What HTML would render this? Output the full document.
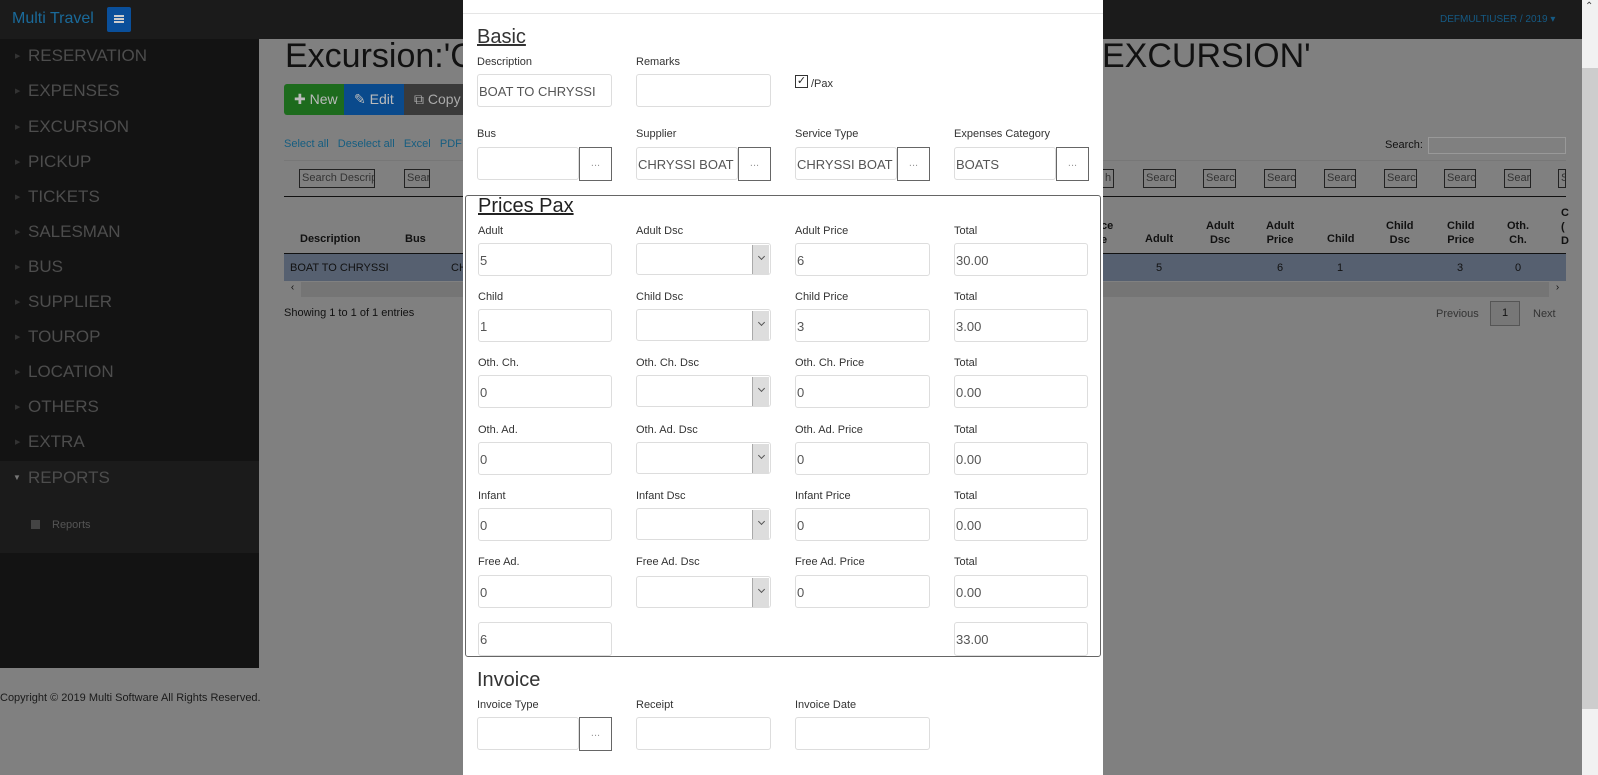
<!DOCTYPE html>
<html><head><meta charset="utf-8"><style>
*{box-sizing:border-box;margin:0;padding:0}
body{width:1598px;height:775px;overflow:hidden;position:relative;background:#808080;font-family:"Liberation Sans",Arial,sans-serif}
.a{position:absolute;white-space:nowrap}
.nav{left:0;top:0;width:1582px;height:39px;background:#1b1b1b}
.side{left:0;top:39px;width:259px;height:629px;background:#131313}
.si{left:28px;font-size:17px;color:#4d4d4d}
.car{left:15px;font-size:7px;color:#333}
.hd{font-size:11px;font-weight:bold;color:#111;text-align:center;line-height:14px}
.sb{height:19px;border:1px solid #222;font-size:11px;color:#333;padding:2px;overflow:hidden}
.modal{left:463px;top:0;width:640px;height:775px;background:#fff}
.lb{font-size:11px;color:#333}
.in{height:33px;border:1px solid #ddd;border-radius:3px;font-size:13px;color:#555;padding:9px 1px;overflow:hidden;background:#fff}
.bt{width:33px;height:34px;border:1px solid #666;font-size:11px;color:#999;text-align:center;line-height:30px;background:#fff}
.sel{height:32px;width:135px;border:1px solid #ddd;border-radius:3px;background:#fff}
.sel:after{content:"";position:absolute;right:1px;top:1px;width:16px;height:29px;background:#ddd;border-left:1px solid #aaa}
.sel i{position:absolute;right:6px;top:10px;width:5px;height:5px;border-right:1px solid #555;border-bottom:1px solid #555;transform:rotate(45deg);z-index:2}
</style></head><body>
<div class="a nav"></div>
<div class="a" style="left:12px;top:10px;font-size:16px;color:#1a6a9a">Multi Travel</div>
<div class="a" style="left:107px;top:7px;width:24px;height:25px;background:#0a4f9a;border-radius:2px"><div style="position:absolute;left:7px;top:8px;width:10px;height:2px;background:#ccc;box-shadow:0 3px 0 #ccc,0 6px 0 #ccc"></div></div>
<div class="a" style="left:1440px;top:14px;font-size:10px;color:#155a84">DEFMULTIUSER / 2019 &#9662;</div>
<div class="a" style="left:1582px;top:0;width:16px;height:775px;background:#f1f1f1"></div>
<div class="a" style="left:1582px;top:68px;width:16px;height:641px;background:#cdcdcd"></div>
<div class="a" style="left:1585px;top:1px;font-size:10px;color:#444">&#8963;</div>
<div class="a side"></div>
<div class="a" style="left:0;top:461px;width:259px;height:92px;background:#1b1b1b"></div>
<div class="a car" style="top:52px">&#9654;</div><div class="a si" style="top:46px">RESERVATION</div>
<div class="a car" style="top:87px">&#9654;</div><div class="a si" style="top:81px">EXPENSES</div>
<div class="a car" style="top:123px">&#9654;</div><div class="a si" style="top:117px">EXCURSION</div>
<div class="a car" style="top:158px">&#9654;</div><div class="a si" style="top:152px">PICKUP</div>
<div class="a car" style="top:193px">&#9654;</div><div class="a si" style="top:187px">TICKETS</div>
<div class="a car" style="top:228px">&#9654;</div><div class="a si" style="top:222px">SALESMAN</div>
<div class="a car" style="top:263px">&#9654;</div><div class="a si" style="top:257px">BUS</div>
<div class="a car" style="top:298px">&#9654;</div><div class="a si" style="top:292px">SUPPLIER</div>
<div class="a car" style="top:333px">&#9654;</div><div class="a si" style="top:327px">TOUROP</div>
<div class="a car" style="top:368px">&#9654;</div><div class="a si" style="top:362px">LOCATION</div>
<div class="a car" style="top:403px">&#9654;</div><div class="a si" style="top:397px">OTHERS</div>
<div class="a car" style="top:438px">&#9654;</div><div class="a si" style="top:432px">EXTRA</div>
<div class="a" style="left:13px;top:473px;font-size:8px;color:#777">&#9660;</div><div class="a si" style="top:468px">REPORTS</div>
<div class="a" style="left:31px;top:520px;width:9px;height:9px;background:#444"></div>
<div class="a" style="left:52px;top:519px;font-size:11px;color:#555">Reports</div>
<div class="a" style="left:0;top:692px;font-size:11px;color:#1a1a1a">Copyright © 2019 Multi Software All Rights Reserved.</div>

<div class="a" style="left:285px;top:37px;font-size:34px;color:#111">Excursion:'C</div>
<div class="a" style="left:1102px;top:37px;font-size:34px;color:#111">EXCURSION'</div>
<div class="a" style="left:284px;top:84px;width:60px;height:31px;background:#1d6b1d;border-radius:3px 0 0 3px;color:#bbb;font-size:14px;line-height:31px;padding-left:10px">&#10010; New</div>
<div class="a" style="left:344px;top:84px;width:60px;height:31px;background:#0a4a8c;color:#bbb;font-size:14px;line-height:31px;padding-left:10px">&#9998; Edit</div>
<div class="a" style="left:404px;top:84px;width:60px;height:31px;background:#3a3a3a;color:#aaa;font-size:14px;line-height:31px;padding-left:10px">&#10697; Copy</div>
<div class="a" style="left:284px;top:138px;font-size:11px;color:#155d80;word-spacing:0">Select all &nbsp;&nbsp;Deselect all &nbsp;&nbsp;Excel &nbsp;&nbsp;PDF</div>
<div class="a" style="left:284px;top:160px;width:1282px;height:1px;background:#777"></div>
<div class="a sb" style="left:299px;top:169px;width:76px">Search Descrip</div>
<div class="a sb" style="left:404px;top:169px;width:26px">Sear</div>
<div class="a sb" style="left:1102px;top:169px;width:12px">h</div>
<div class="a sb" style="left:1143px;top:169px;width:33px">Searc</div>
<div class="a sb" style="left:1203px;top:169px;width:33px">Searc</div>
<div class="a sb" style="left:1264px;top:169px;width:32px">Searc</div>
<div class="a sb" style="left:1324px;top:169px;width:32px">Searc</div>
<div class="a sb" style="left:1384px;top:169px;width:33px">Searc</div>
<div class="a sb" style="left:1444px;top:169px;width:32px">Searc</div>
<div class="a sb" style="left:1504px;top:169px;width:27px">Sear</div>
<div class="a sb" style="left:1558px;top:169px;width:8px">S</div>
<div class="a" style="left:1385px;top:139px;font-size:11px;color:#111">Search:</div>
<div class="a" style="left:1428px;top:137px;width:138px;height:17px;border:1px solid #999;background:#808080"></div>
<div class="a" style="left:284px;top:196px;width:1282px;height:1px;background:#111"></div>
<div class="a hd" style="left:300px;top:232px">Description</div>
<div class="a hd" style="left:405px;top:232px">Bus</div>
<div class="a hd" style="left:1101px;top:219px;text-align:left">ce<br>e</div>
<div class="a hd" style="left:1145px;top:232px">Adult</div>
<div class="a hd" style="left:1206px;top:219px">Adult<br>Dsc</div>
<div class="a hd" style="left:1266px;top:219px">Adult<br>Price</div>
<div class="a hd" style="left:1327px;top:232px">Child</div>
<div class="a hd" style="left:1386px;top:219px">Child<br>Dsc</div>
<div class="a hd" style="left:1447px;top:219px">Child<br>Price</div>
<div class="a hd" style="left:1507px;top:219px">Oth.<br>Ch.</div>
<div class="a hd" style="left:1561px;top:206px;text-align:left">C<br>(<br>D</div>
<div class="a" style="left:284px;top:253px;width:1282px;height:1px;background:#111"></div>
<div class="a" style="left:284px;top:254px;width:1282px;height:27px;background:#566070"></div>
<div class="a" style="left:290px;top:262px;font-size:11px;color:#111">BOAT TO CHRYSSI</div>
<div class="a" style="left:451px;top:262px;font-size:11px;color:#111">CH</div>
<div class="a" style="left:1156px;top:262px;font-size:11px;color:#111">5</div>
<div class="a" style="left:1277px;top:262px;font-size:11px;color:#111">6</div>
<div class="a" style="left:1337px;top:262px;font-size:11px;color:#111">1</div>
<div class="a" style="left:1457px;top:262px;font-size:11px;color:#111">3</div>
<div class="a" style="left:1515px;top:262px;font-size:11px;color:#111">0</div>
<div class="a" style="left:284px;top:282px;width:1282px;height:15px;background:#757575"></div>
<div class="a" style="left:284px;top:282px;width:17px;height:15px;background:#808080;font-size:10px;color:#111;text-align:center">&#8249;</div>
<div class="a" style="left:1549px;top:282px;width:17px;height:15px;background:#808080;font-size:10px;color:#111;text-align:center">&#8250;</div>
<div class="a" style="left:284px;top:307px;font-size:11px;color:#111">Showing 1 to 1 of 1 entries</div>
<div class="a" style="left:1436px;top:308px;font-size:11px;color:#333">Previous</div>
<div class="a" style="left:1490px;top:301px;width:30px;height:25px;border:1px solid #555;background:#777;font-size:11px;color:#111;text-align:center;line-height:23px">1</div>
<div class="a" style="left:1533px;top:308px;font-size:11px;color:#333">Next</div>

<div class="a modal"></div>
<div class="a" style="left:463px;top:13px;width:640px;height:1px;background:#e5e5e5"></div>
<div class="a" style="left:477px;top:26px;font-size:20px;color:#333;text-decoration:underline">Basic</div>
<div class="a lb" style="left:477px;top:56px">Description</div>
<div class="a lb" style="left:636px;top:56px">Remarks</div>
<div class="a in" style="left:477px;top:74px;width:135px">BOAT TO CHRYSSI</div>
<div class="a in" style="left:636px;top:74px;width:135px"></div>
<div class="a" style="left:795px;top:75px;width:13px;height:13px;border:1px solid #333;font-size:11px;line-height:11px;text-align:center;color:#222">&#10003;</div>
<div class="a lb" style="left:811px;top:78px">/Pax</div>
<div class="a lb" style="left:477px;top:128px">Bus</div>
<div class="a lb" style="left:636px;top:128px">Supplier</div>
<div class="a lb" style="left:795px;top:128px">Service Type</div>
<div class="a lb" style="left:954px;top:128px">Expenses Category</div>
<div class="a in" style="left:477px;top:147px;width:102px"></div><div class="a bt" style="left:579px;top:147px">...</div>
<div class="a in" style="left:636px;top:147px;width:102px">CHRYSSI BOAT C</div><div class="a bt" style="left:738px;top:147px">...</div>
<div class="a in" style="left:795px;top:147px;width:102px">CHRYSSI BOAT</div><div class="a bt" style="left:897px;top:147px">...</div>
<div class="a in" style="left:954px;top:147px;width:102px">BOATS</div><div class="a bt" style="left:1056px;top:147px">...</div>
<div class="a" style="left:465px;top:195px;width:636px;height:462px;border:1px solid #666;border-radius:3px"></div>
<div class="a" style="left:478px;top:195px;font-size:20px;color:#222;text-decoration:underline">Prices Pax</div>

<div class="a lb" style="left:478px;top:225px">Adult</div><div class="a lb" style="left:636px;top:225px">Adult Dsc</div><div class="a lb" style="left:795px;top:225px">Adult Price</div><div class="a lb" style="left:954px;top:225px">Total</div>
<div class="a in" style="left:478px;top:243px;width:134px">5</div><div class="a sel" style="left:636px;top:243px"><i></i></div><div class="a in" style="left:795px;top:243px;width:135px">6</div><div class="a in" style="left:954px;top:243px;width:134px">30.00</div>

<div class="a lb" style="left:478px;top:291px">Child</div><div class="a lb" style="left:636px;top:291px">Child Dsc</div><div class="a lb" style="left:795px;top:291px">Child Price</div><div class="a lb" style="left:954px;top:291px">Total</div>
<div class="a in" style="left:478px;top:309px;width:134px">1</div><div class="a sel" style="left:636px;top:309px"><i></i></div><div class="a in" style="left:795px;top:309px;width:135px">3</div><div class="a in" style="left:954px;top:309px;width:134px">3.00</div>

<div class="a lb" style="left:478px;top:357px">Oth. Ch.</div><div class="a lb" style="left:636px;top:357px">Oth. Ch. Dsc</div><div class="a lb" style="left:795px;top:357px">Oth. Ch. Price</div><div class="a lb" style="left:954px;top:357px">Total</div>
<div class="a in" style="left:478px;top:375px;width:134px">0</div><div class="a sel" style="left:636px;top:375px"><i></i></div><div class="a in" style="left:795px;top:375px;width:135px">0</div><div class="a in" style="left:954px;top:375px;width:134px">0.00</div>

<div class="a lb" style="left:478px;top:424px">Oth. Ad.</div><div class="a lb" style="left:636px;top:424px">Oth. Ad. Dsc</div><div class="a lb" style="left:795px;top:424px">Oth. Ad. Price</div><div class="a lb" style="left:954px;top:424px">Total</div>
<div class="a in" style="left:478px;top:442px;width:134px">0</div><div class="a sel" style="left:636px;top:442px"><i></i></div><div class="a in" style="left:795px;top:442px;width:135px">0</div><div class="a in" style="left:954px;top:442px;width:134px">0.00</div>

<div class="a lb" style="left:478px;top:490px">Infant</div><div class="a lb" style="left:636px;top:490px">Infant Dsc</div><div class="a lb" style="left:795px;top:490px">Infant Price</div><div class="a lb" style="left:954px;top:490px">Total</div>
<div class="a in" style="left:478px;top:508px;width:134px">0</div><div class="a sel" style="left:636px;top:508px"><i></i></div><div class="a in" style="left:795px;top:508px;width:135px">0</div><div class="a in" style="left:954px;top:508px;width:134px">0.00</div>

<div class="a lb" style="left:478px;top:556px">Free Ad.</div><div class="a lb" style="left:636px;top:556px">Free Ad. Dsc</div><div class="a lb" style="left:795px;top:556px">Free Ad. Price</div><div class="a lb" style="left:954px;top:556px">Total</div>
<div class="a in" style="left:478px;top:575px;width:134px">0</div><div class="a sel" style="left:636px;top:576px"><i></i></div><div class="a in" style="left:795px;top:575px;width:135px">0</div><div class="a in" style="left:954px;top:575px;width:134px">0.00</div>

<div class="a in" style="left:478px;top:622px;width:134px;height:34px">6</div>
<div class="a in" style="left:954px;top:622px;width:134px;height:34px">33.00</div>

<div class="a" style="left:477px;top:669px;font-size:20px;color:#333">Invoice</div>
<div class="a lb" style="left:477px;top:699px">Invoice Type</div>
<div class="a lb" style="left:636px;top:699px">Receipt</div>
<div class="a lb" style="left:795px;top:699px">Invoice Date</div>
<div class="a in" style="left:477px;top:717px;width:102px"></div><div class="a bt" style="left:579px;top:717px">...</div>
<div class="a in" style="left:636px;top:717px;width:135px"></div>
<div class="a in" style="left:795px;top:717px;width:135px"></div>
</body></html>
